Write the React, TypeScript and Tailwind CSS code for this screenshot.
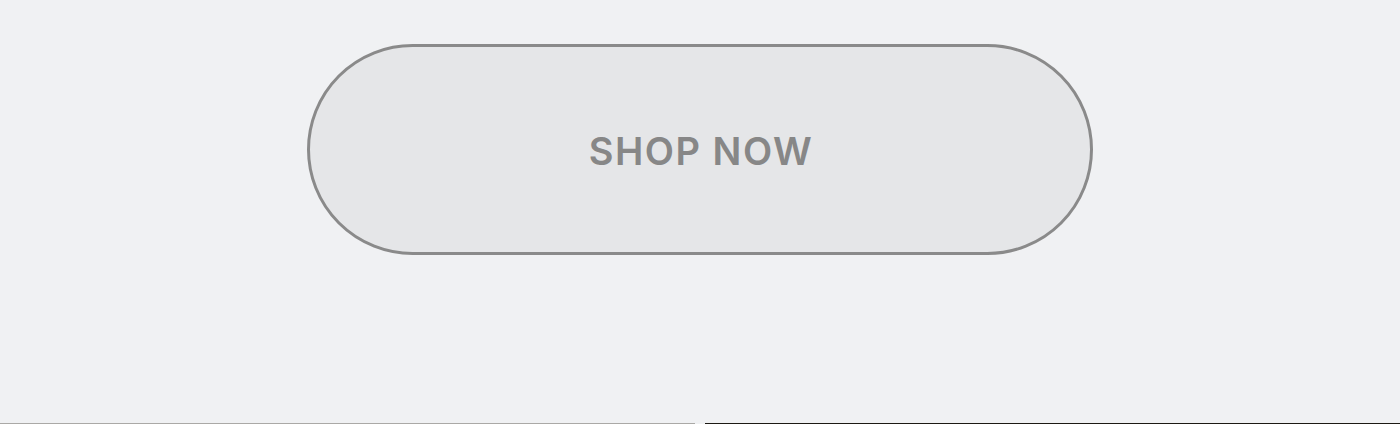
export default function App() {
  return (
    <div className="min-h-screen bg-[#f0f1f3] font-['Liberation_Sans',Arial,sans-serif]">
      <div className="flex justify-center pt-[44px]">
        <button
          type="button"
          className="flex h-[211px] w-[786px] items-center justify-center rounded-full border-[3px] border-[#8a8a8a] bg-[#e5e6e8] pt-[3px] pl-[2px] font-['Inter',sans-serif] text-[38px] font-semibold tracking-[1.5px] text-[#878787]"
        >
          SHOP NOW
        </button>
      </div>

      <div className="mt-[168px] grid grid-cols-2 gap-[10px]">
        <div className="h-[400px] bg-gradient-to-b from-[#aaa9a6] to-[#8f8e8a]" />
        <div className="h-[400px] bg-gradient-to-b from-[#1c1914] to-[#3a342c]" />
      </div>
    </div>
  )
}
